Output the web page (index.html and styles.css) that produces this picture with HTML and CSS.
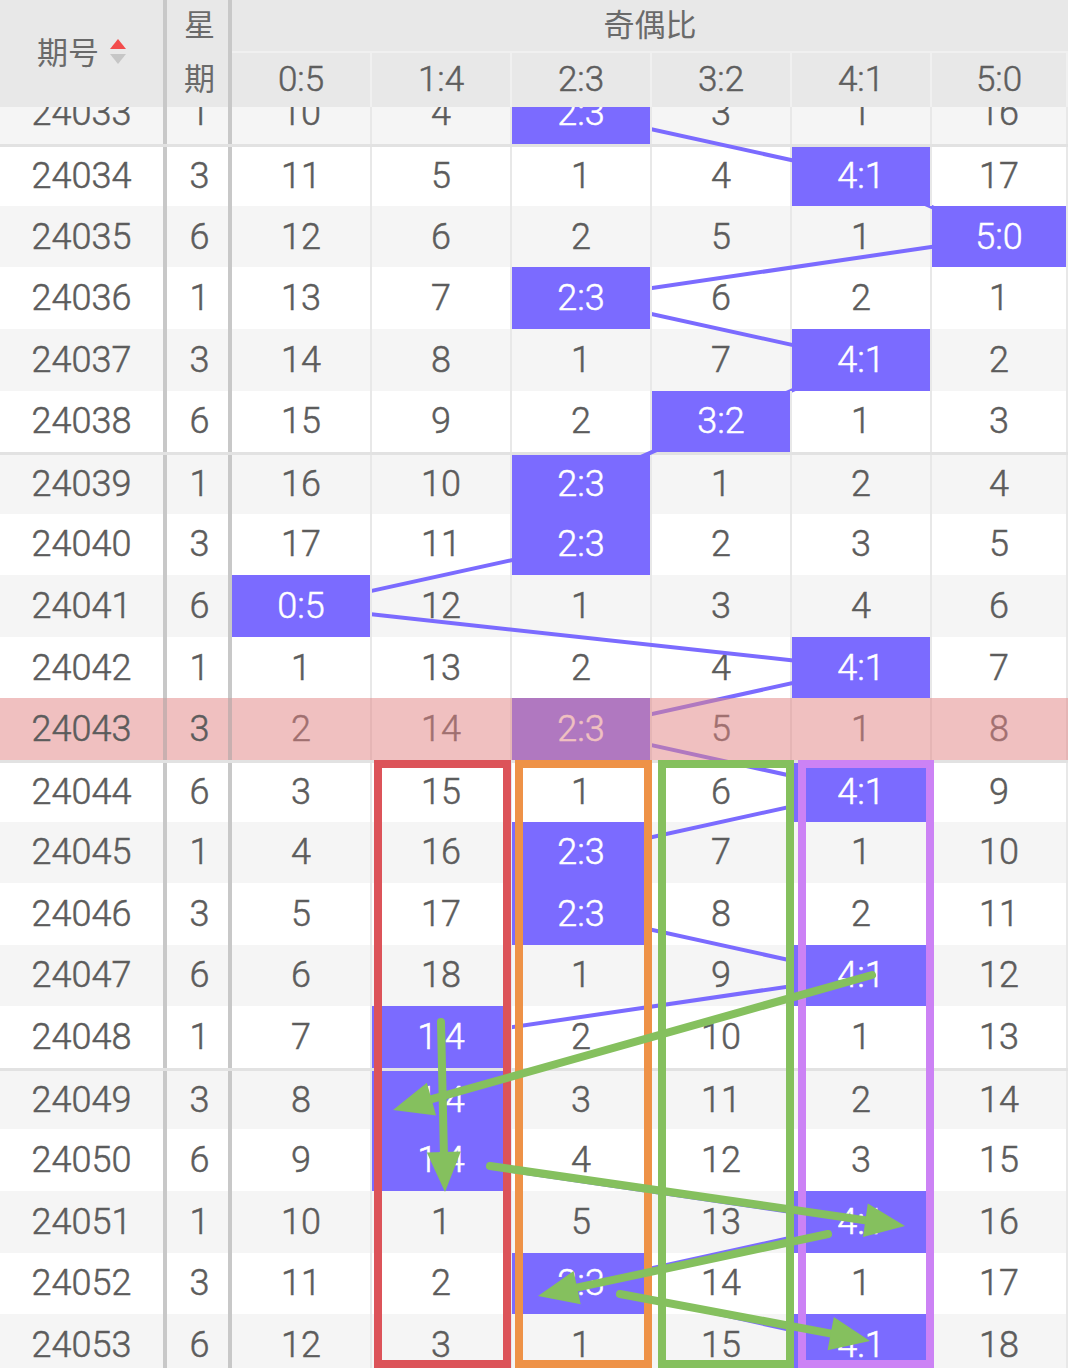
FILE: index.html
```html
<!DOCTYPE html>
<html lang="zh">
<head>
<meta charset="utf-8">
<title>奇偶比走势</title>
<link rel="stylesheet" href="styles.css">
</head>
<body>
<div class="sheet">
  <div class="thead">
    <div class="h-id"><span>期号</span>
      <svg class="sort" width="16" height="26" viewBox="0 0 16 26"><polygon points="8,0 16,10 0,10" fill="#f24c4c"/><polygon points="0,15 16,15 8,25" fill="#c6c6c6"/></svg>
    </div>
    <div class="h-week"><span>星</span><span>期</span></div>
    <div class="h-group">奇偶比</div>
    <div class="h-sub">0:5</div>
    <div class="h-sub">1:4</div>
    <div class="h-sub">2:3</div>
    <div class="h-sub">3:2</div>
    <div class="h-sub">4:1</div>
    <div class="h-sub last">5:0</div>
  </div>

  <div class="tbody">
    <svg class="trend" width="1068" height="1294" viewBox="0 0 1068 1294">
      <polyline points="581,30.8 861,92.4 999,154 581,215.5 861,277.1 721,338.7 581,400.3 581,461.9 301,523.4 861,585 581,646.6 861,708.2 581,769.8 581,831.3 861,892.9 441,954.5 441,1016.1 441,1077.7 861,1139.2 581,1200.8 861,1262.4" fill="none" stroke="#7b6bff" stroke-width="4" stroke-linejoin="round"/>
    </svg>

    <div class="row alt"><div class="cell id">24033</div><div class="cell wk">1</div><div class="cell">10</div><div class="cell">4</div><div class="cell hit">2:3</div><div class="cell">3</div><div class="cell">1</div><div class="cell">16</div></div>
    <div class="row group"><div class="cell id">24034</div><div class="cell wk">3</div><div class="cell">11</div><div class="cell">5</div><div class="cell">1</div><div class="cell">4</div><div class="cell hit">4:1</div><div class="cell">17</div></div>
    <div class="row alt"><div class="cell id">24035</div><div class="cell wk">6</div><div class="cell">12</div><div class="cell">6</div><div class="cell">2</div><div class="cell">5</div><div class="cell">1</div><div class="cell hit">5:0</div></div>
    <div class="row"><div class="cell id">24036</div><div class="cell wk">1</div><div class="cell">13</div><div class="cell">7</div><div class="cell hit">2:3</div><div class="cell">6</div><div class="cell">2</div><div class="cell">1</div></div>
    <div class="row alt"><div class="cell id">24037</div><div class="cell wk">3</div><div class="cell">14</div><div class="cell">8</div><div class="cell">1</div><div class="cell">7</div><div class="cell hit">4:1</div><div class="cell">2</div></div>
    <div class="row"><div class="cell id">24038</div><div class="cell wk">6</div><div class="cell">15</div><div class="cell">9</div><div class="cell">2</div><div class="cell hit">3:2</div><div class="cell">1</div><div class="cell">3</div></div>
    <div class="row alt group"><div class="cell id">24039</div><div class="cell wk">1</div><div class="cell">16</div><div class="cell">10</div><div class="cell hit">2:3</div><div class="cell">1</div><div class="cell">2</div><div class="cell">4</div></div>
    <div class="row"><div class="cell id">24040</div><div class="cell wk">3</div><div class="cell">17</div><div class="cell">11</div><div class="cell hit">2:3</div><div class="cell">2</div><div class="cell">3</div><div class="cell">5</div></div>
    <div class="row alt"><div class="cell id">24041</div><div class="cell wk">6</div><div class="cell hit">0:5</div><div class="cell">12</div><div class="cell">1</div><div class="cell">3</div><div class="cell">4</div><div class="cell">6</div></div>
    <div class="row"><div class="cell id">24042</div><div class="cell wk">1</div><div class="cell">1</div><div class="cell">13</div><div class="cell">2</div><div class="cell">4</div><div class="cell hit">4:1</div><div class="cell">7</div></div>
    <div class="row today"><div class="cell id">24043</div><div class="cell wk">3</div><div class="cell">2</div><div class="cell">14</div><div class="cell hit">2:3</div><div class="cell">5</div><div class="cell">1</div><div class="cell">8</div></div>
    <div class="row group"><div class="cell id">24044</div><div class="cell wk">6</div><div class="cell">3</div><div class="cell">15</div><div class="cell">1</div><div class="cell">6</div><div class="cell hit">4:1</div><div class="cell">9</div></div>
    <div class="row alt"><div class="cell id">24045</div><div class="cell wk">1</div><div class="cell">4</div><div class="cell">16</div><div class="cell hit">2:3</div><div class="cell">7</div><div class="cell">1</div><div class="cell">10</div></div>
    <div class="row"><div class="cell id">24046</div><div class="cell wk">3</div><div class="cell">5</div><div class="cell">17</div><div class="cell hit">2:3</div><div class="cell">8</div><div class="cell">2</div><div class="cell">11</div></div>
    <div class="row alt"><div class="cell id">24047</div><div class="cell wk">6</div><div class="cell">6</div><div class="cell">18</div><div class="cell">1</div><div class="cell">9</div><div class="cell hit">4:1</div><div class="cell">12</div></div>
    <div class="row"><div class="cell id">24048</div><div class="cell wk">1</div><div class="cell">7</div><div class="cell hit">1:4</div><div class="cell">2</div><div class="cell">10</div><div class="cell">1</div><div class="cell">13</div></div>
    <div class="row alt group"><div class="cell id">24049</div><div class="cell wk">3</div><div class="cell">8</div><div class="cell hit">1:4</div><div class="cell">3</div><div class="cell">11</div><div class="cell">2</div><div class="cell">14</div></div>
    <div class="row"><div class="cell id">24050</div><div class="cell wk">6</div><div class="cell">9</div><div class="cell hit">1:4</div><div class="cell">4</div><div class="cell">12</div><div class="cell">3</div><div class="cell">15</div></div>
    <div class="row alt"><div class="cell id">24051</div><div class="cell wk">1</div><div class="cell">10</div><div class="cell">1</div><div class="cell">5</div><div class="cell">13</div><div class="cell hit">4:1</div><div class="cell">16</div></div>
    <div class="row"><div class="cell id">24052</div><div class="cell wk">3</div><div class="cell">11</div><div class="cell">2</div><div class="cell hit">2:3</div><div class="cell">14</div><div class="cell">1</div><div class="cell">17</div></div>
    <div class="row alt"><div class="cell id">24053</div><div class="cell wk">6</div><div class="cell">12</div><div class="cell">3</div><div class="cell">1</div><div class="cell">15</div><div class="cell hit">4:1</div><div class="cell">18</div></div>
  </div>

  <svg class="marks" width="1068" height="1368" viewBox="0 0 1068 1368">
    <rect x="378" y="764" width="129" height="600" fill="none" stroke="#dc5359" stroke-width="8"/>
    <rect x="519" y="764" width="129" height="600" fill="none" stroke="#ee9247" stroke-width="8"/>
    <rect x="662" y="764" width="128" height="600" fill="none" stroke="#85c05e" stroke-width="8"/>
    <rect x="802" y="764" width="128" height="600" fill="none" stroke="#cc82f5" stroke-width="8"/>
    <g stroke="#85c05e" stroke-width="8" stroke-linecap="round" fill="none">
      <line x1="872" y1="975" x2="421.9" y2="1101.9"/>
      <line x1="441" y1="1022" x2="444.1" y2="1162"/>
      <line x1="490" y1="1166" x2="875.3" y2="1221.7"/>
      <line x1="828" y1="1234" x2="567.3" y2="1289.7"/>
      <line x1="620" y1="1294" x2="840.5" y2="1335.4"/>
    </g>
    <g fill="#85c05e">
      <polygon points="393,1110 426.9,1082.8 436.1,1115.5"/>
      <polygon points="445,1192 426.8,1152.5 460.8,1151.5"/>
      <polygon points="905,1226 863,1237.1 867.8,1203.5"/>
      <polygon points="538,1296 573.6,1271 580.7,1304.2"/>
      <polygon points="870,1341 827.6,1350.3 833.8,1316.9"/>
    </g>
  </svg>
</div>
</body>
</html>
```

FILE: styles.css
```css
html, body {
  margin: 0;
  padding: 0;
  background: #ffffff;
  overflow: hidden;
}

.sheet {
  position: relative;
  width: 1068px;
  height: 1368px;
  overflow: hidden;
  font-family: Roboto, "Noto Sans CJK SC", sans-serif;
  font-weight: 300;
  color: #5c5c5c;
}

/* ---------- header ---------- */
.thead {
  position: relative;
  z-index: 10;
  display: grid;
  grid-template-columns: 167px 65px repeat(5, 140px) 136px;
  grid-template-rows: 53px 54px;
  background: #e8e8e8;
  font-family: "Noto Sans CJK SC", sans-serif;
  font-weight: 400;
  font-size: 31px;
  color: #6a6a6a;
}

.h-id {
  grid-row: 1 / 3;
  grid-column: 1;
  border-right: 4px solid #c8c8c8;
  display: flex;
  align-items: center;
  justify-content: center;
  gap: 11px;
  padding: 0 0 6px 0;
}

.sort {
  display: block;
  margin-top: 2px;
}

.h-week {
  grid-row: 1 / 3;
  grid-column: 2;
  border-right: 4px solid #c8c8c8;
  display: flex;
  flex-direction: column;
  align-items: center;
  justify-content: space-between;
  padding: 3px 0 10px 4px;
  line-height: 40px;
}

.h-group {
  grid-row: 1;
  grid-column: 3 / 9;
  border-bottom: 2px solid #f0f0f0;
  display: flex;
  align-items: center;
  justify-content: center;
  padding-bottom: 6px;
}

.h-sub {
  grid-row: 2;
  display: flex;
  align-items: center;
  justify-content: center;
  border-right: 2px solid #f0f0f0;
  font-family: Roboto, sans-serif;
  font-weight: 300;
  font-size: 35px;
  color: #5e5e5e;
  -webkit-text-stroke: 0.5px #5e5e5e;
  padding-bottom: 2px;
}

.h-sub.last {
  border-right: 2px solid #f0f0f0;
}

/* ---------- body ---------- */
.tbody {
  position: relative;
  margin-top: -24.4px;
}

.trend {
  position: absolute;
  left: 0;
  top: 0;
  z-index: 1;
}

.row {
  display: grid;
  grid-template-columns: 167px 65px repeat(5, 140px) 136px;
  height: 61.58px;
  box-sizing: border-box;
  font-size: 36px;
  background: #ffffff;
}

.row.alt {
  background: #f5f5f5;
}

.row.group {
  border-top: 3px solid #e2e2e2;
}

.cell {
  display: flex;
  align-items: center;
  justify-content: center;
  box-sizing: border-box;
  border-right: 2px solid #e8e8e8;
  -webkit-text-stroke: 0.5px currentColor;
}

.cell.id,
.cell.wk {
  border-right: 4px solid #c8c8c8;
}

.cell.wk {
  padding-left: 4px;
}

.cell.hit {
  position: relative;
  z-index: 2;
  background: #7b6bff;
  color: #ffffff;
}

/* today's row: pink wash over the chart */
.row.today {
  position: relative;
  background: #ffffff;
}

.row.today .cell.id,
.row.today .cell.wk {
  background: #f0c0c0;
  border-right-color: #c9b0b0;
}

.row.today::after {
  content: "";
  position: absolute;
  left: 232px;
  right: 0;
  top: 0;
  bottom: 0;
  z-index: 3;
  background: rgba(226, 133, 133, 0.515);
}

/* ---------- annotation marks ---------- */
.marks {
  position: absolute;
  left: 0;
  top: 0;
  z-index: 20;
  pointer-events: none;
}
```
